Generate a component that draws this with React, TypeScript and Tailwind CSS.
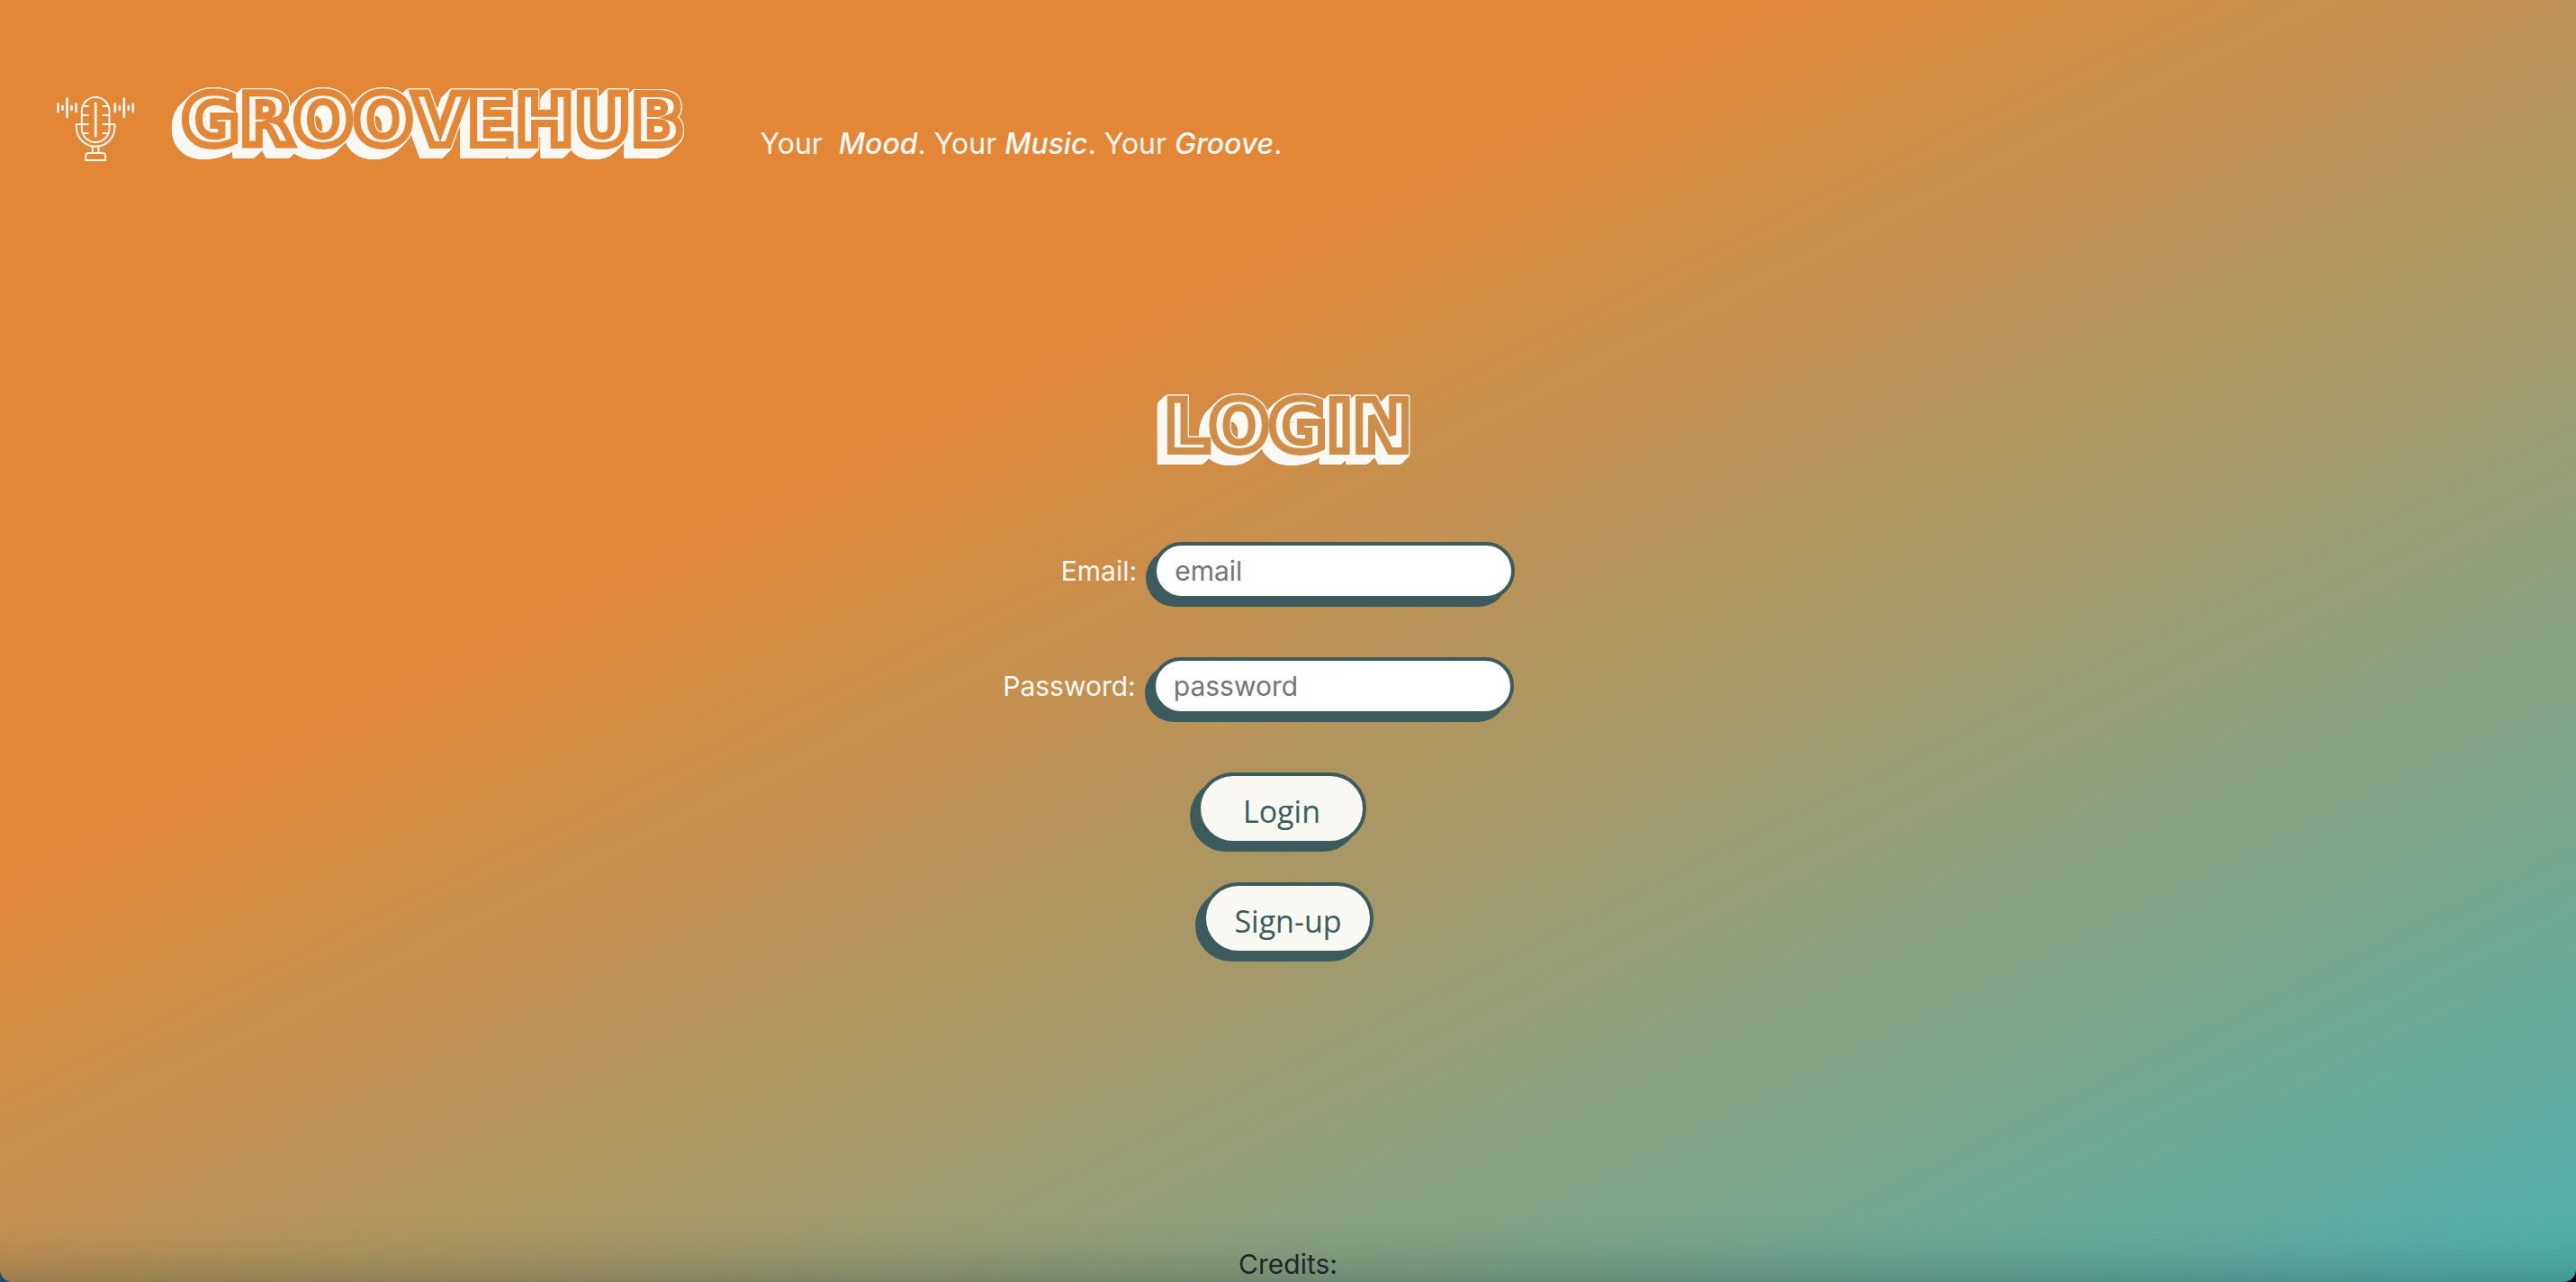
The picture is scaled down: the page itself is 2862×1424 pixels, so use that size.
import React from "react";

const display =
  "font-['DejaVu_Sans',sans-serif] font-bold text-[78px] leading-[80px] uppercase text-[#f9f8f3] whitespace-nowrap [font-kerning:none]";

const outline = [
  "drop-shadow(1px 0px 0px #f9f8f3)",
  "drop-shadow(-1px 0px 0px #f9f8f3)",
  "drop-shadow(0px 1px 0px #f9f8f3)",
  "drop-shadow(0px -1px 0px #f9f8f3)",
];
const depth = Array.from({ length: 10 }, () => "drop-shadow(-1px 1px 0px #f9f8f3)");
const extrude = [...outline, ...depth].join(" ");

const pill =
  "rounded-full border-4 border-[#3b5b5c] shadow-[-8px_8px_0_#3b5b5c]";

function MicIcon() {
  return (
    <svg
      viewBox="30 45 275 225"
      className="h-[75px] w-[92px] shrink-0"
      fill="none"
      stroke="#f9f8f3"
      strokeWidth="6"
      strokeLinecap="round"
      strokeLinejoin="round"
      aria-hidden="true"
    >
      <rect x="122" y="54" width="92" height="150" rx="46" />
      <path d="M168 74V184" strokeWidth="8" />
      <path d="M125 84H143M122 114H143M122 144H143M125 174H143M193 84H211M193 114H214M193 144H214M193 174H211" />
      <path d="M122 144H104V154A64 64 0 0 0 232 154V144H214" />
      <path d="M158 219V240M178 219V240" />
      <path d="M135 264V250Q135 240 145 240H191Q201 240 201 250V264Z" />
      <path
        strokeWidth="8"
        d="M43 77V102M58 84V95M73 59V120M88 84V95M103 77V102M233 77V102M248 84V95M263 59V120M278 84V95M293 77V102"
      />
    </svg>
  );
}

export default function App() {
  return (
    <div className="h-screen overflow-hidden bg-linear-to-r from-[#1f4a72] to-[#050a18] font-['Inter',sans-serif] text-[30px] leading-[48px] text-[#f9f8f3]">
      <div className="flex h-full flex-col overflow-hidden rounded-b-[14px] bg-[linear-gradient(to_bottom_right,#e38737_33%,#4fb1ad)] shadow-[inset_0_-70px_60px_-66px_rgba(20,40,50,0.35)]">
        <header className="flex items-start px-[60px] pt-[94px]">
          <div className="pt-[11px]">
            <MicIcon />
          </div>
          <h1
            className={`${display} ml-[50px] [-webkit-text-stroke:8px_#e38737]`}
            style={{ filter: extrude }}
          >
            GrooveHub
          </h1>
          <p className="ml-[84px] pt-[42px] text-[32px] leading-[48px] whitespace-pre">
            {"Your  "}
            <em className="font-medium">Mood</em>. Your <em className="font-medium">Music</em>. Your{" "}
            <em className="font-medium">Groove</em>.
          </p>
        </header>

        <main className="flex flex-col items-center pt-[250px]">
          <h2
            className={`${display} [-webkit-text-stroke:8px_#d08d48]`}
            style={{ filter: extrude }}
          >
            Login
          </h2>
          <form className="mt-[88px] flex flex-col items-center" onSubmit={(e) => e.preventDefault()}>
            <div className="flex items-center gap-[18px]">
              <label htmlFor="email">Email:</label>
              <input
                id="email"
                type="email"
                placeholder="email"
                className={`${pill} h-[64px] w-[402px] bg-white px-[20px] text-[#212529] placeholder:text-[#757575]`}
              />
            </div>
            <div className="mt-[64px] mr-[66px] flex items-center gap-[18px]">
              <label htmlFor="password">Password:</label>
              <input
                id="password"
                type="password"
                placeholder="password"
                className={`${pill} h-[64px] w-[402px] bg-white px-[20px] text-[#212529] placeholder:text-[#757575]`}
              />
            </div>
            <button
              type="submit"
              className={`${pill} mt-[64px] mr-[14px] h-[80px] w-[188px] bg-[#f9f8f3] pt-[6px] font-['Open_Sans',sans-serif] text-[34px] text-[#3b5b5c]`}
            >
              Login
            </button>
            <button
              type="button"
              className={`${pill} mt-[42px] h-[80px] w-[190px] bg-[#f9f8f3] pt-[6px] font-['Open_Sans',sans-serif] text-[34px] text-[#3b5b5c]`}
            >
              Sign-up
            </button>
          </form>
        </main>

        <footer className="mt-auto text-center leading-[40px] text-[#212529]">Credits:</footer>
      </div>
    </div>
  );
}
